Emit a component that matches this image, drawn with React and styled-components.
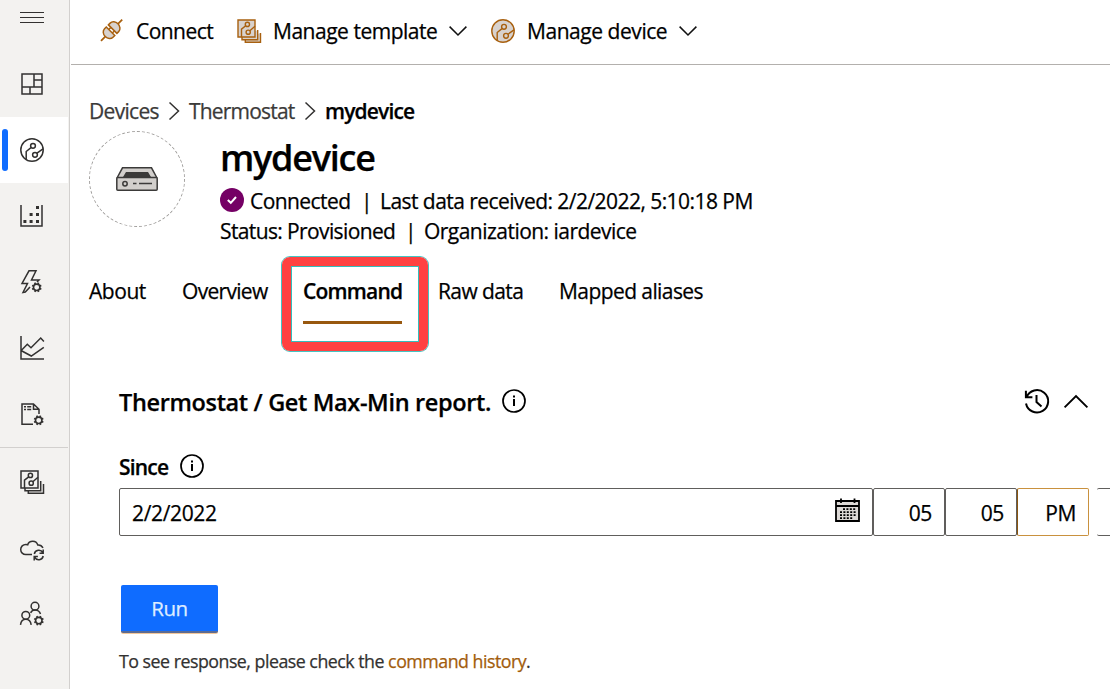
import React from "react";
import styled, { createGlobalStyle } from "styled-components";

const GlobalStyle = createGlobalStyle`
  * { box-sizing: border-box; }
  body {
    margin: 0;
    background: #fff;
    color: #000;
    font-family: "Open Sans", "Noto Sans", sans-serif;
    font-size: 21px;
    -webkit-text-stroke: 0.25px currentColor;
    overflow: hidden;
  }
`;

const Page = styled.div`
  display: flex;
  width: 1110px;
  height: 689px;
  overflow: hidden;
`;

const Sidebar = styled.nav`
  flex: none;
  width: 70px;
  height: 689px;
  background: #f3f2f0;
  border-right: 1px solid #d2d0ce;
  display: flex;
  flex-direction: column;
`;

const MenuButton = styled.div`
  height: 51px;
  padding: 11px 0 0 20px;
`;

const NavItem = styled.div`
  width: 68px;
  height: ${(p) => p.$height || 66}px;
  display: flex;
  align-items: center;
  padding-left: ${(p) => (p.$active ? 2 : 20)}px;
  gap: 12px;
  background: ${(p) => (p.$active ? "#fff" : "transparent")};
`;

const ActiveBar = styled.span`
  width: 6px;
  height: 42px;
  border-radius: 3px;
  background: #0f6cff;
`;

const NavDivider = styled.hr`
  width: 68px;
  height: 1px;
  margin: 0;
  border: 0;
  background: #d2d0ce;
`;

const Icon = styled.svg`
  display: block;
  flex: none;
  fill: none;
  stroke: ${(p) => p.$color || "#323130"};
  stroke-width: ${(p) => p.$stroke || 1.5};
  overflow: visible;
`;

const Main = styled.main`
  flex: 1;
  min-width: 0;
  display: flex;
  flex-direction: column;
`;

const Toolbar = styled.div`
  flex: none;
  height: 65px;
  margin-left: 1px;
  padding: 0 0 3px 29px;
  display: flex;
  align-items: center;
  border-bottom: 1px solid #b3b0ad;
`;

const ToolbarButton = styled.div`
  display: flex;
  align-items: center;
  width: ${(p) => p.$width}px;
  gap: 12px;
  line-height: 28px;
`;

const Label = styled.span`
  white-space: pre;
  letter-spacing: ${(p) => p.$spacing ?? -0.35}px;
  font-weight: ${(p) => p.$weight || 400};
`;

const Content = styled.div`
  padding-left: 19px;
  display: flex;
  flex-direction: column;
`;

const Breadcrumb = styled.div`
  display: flex;
  align-items: center;
  height: 30px;
  margin-top: 31px;
  color: #3b3a39;
`;

const Crumb = styled(Label)`
  width: ${(p) => p.$width}px;
  color: ${(p) => (p.$current ? "#000" : "#3b3a39")};
`;

const CrumbArrow = styled(Icon)`
  margin-right: 10px;
`;

const DeviceHeader = styled.header`
  display: flex;
  height: 118px;
  margin-top: 5px;
`;

const Avatar = styled.div`
  width: 96px;
  height: 96px;
  margin-right: 35px;
  border: 1px dashed #a19f9d;
  border-radius: 50%;
  display: flex;
  align-items: center;
  justify-content: center;
`;

const DeviceInfo = styled.div`
  display: flex;
  flex-direction: column;
`;

const Title = styled.h1`
  margin: 0;
  height: 55px;
  font-size: 36px;
  line-height: 53px;
  font-weight: 600;
  letter-spacing: -1.25px;
`;

const InfoLine = styled.div`
  display: flex;
  align-items: center;
  height: 30px;
  white-space: pre;
`;

const StatusBadge = styled.span`
  width: 24px;
  height: 24px;
  margin: -3px 6px 0 0;
  border-radius: 50%;
  background: #750065;
  display: flex;
  align-items: center;
  justify-content: center;
`;

const InfoText = styled(Label)`
  width: ${(p) => p.$width}px;
`;

const Tabs = styled.div`
  display: flex;
  height: 75px;
  margin-top: 27px;
`;

const Tab = styled.div`
  position: relative;
  height: 48px;
  width: ${(p) => p.$width}px;
  margin-right: ${(p) => p.$gap}px;
  line-height: 31px;
  border-bottom: 3px solid ${(p) => (p.$active ? "#98580f" : "transparent")};
`;

const Highlight = styled.div`
  position: absolute;
  left: -21px;
  top: -19px;
  width: 146px;
  height: 94px;
  border: 9px solid #ff4141;
  border-radius: 8px;
  box-shadow: 0 0 0 1px #45c4c3, inset 0 0 0 1px #35bdbb;
`;

const CommandCard = styled.section`
  display: flex;
  flex-direction: column;
  padding-left: 30px;
  margin-top: 35px;
`;

const CommandHead = styled.div`
  display: flex;
  align-items: center;
  height: 32px;
  font-size: 23.5px;
`;

const HeadText = styled(Label)`
  width: 383px;
`;

const HeadActions = styled.div`
  display: flex;
  align-items: center;
  margin: -2px 22px 0 auto;
  gap: 15px;
`;

const FieldLabel = styled.div`
  display: flex;
  align-items: center;
  height: 30px;
  margin-top: 34px;
`;

const FieldName = styled(Label)`
  width: 61px;
`;

const Fields = styled.div`
  display: flex;
  margin-top: 6px;
`;

const Field = styled.div`
  flex: none;
  display: flex;
  align-items: center;
  justify-content: space-between;
  width: ${(p) => p.$width}px;
  height: 48px;
  padding: 2px 12px 0;
  border: 1px solid ${(p) => (p.$focused ? "#c9913e" : "#605e5c")};
  border-radius: 2px;
`;

const TimeField = styled(Field)`
  justify-content: flex-end;
  border-left-color: ${(p) => (p.$focused ? "#8a560f" : "#605e5c")};
`;

const ZoneField = styled(Field)`
  margin-left: 8px;
  border-left: 0;
`;

const CalendarIcon = styled(Icon)`
  margin-top: -6px;
`;

const RunButton = styled.button`
  width: 97px;
  height: 48px;
  margin: 49px 0 0 2px;
  padding: 0;
  border: 0;
  border-bottom: 2px solid #5a6b94;
  border-radius: 2px;
  background: #0f6cff;
  color: #deecff;
  font: 400 20.5px/46px "Open Sans", "Noto Sans", sans-serif;
  letter-spacing: -0.4px;
  box-shadow: 0 1px 0 #f2c79a;
`;

const Footnote = styled.p`
  margin: 14px 0 0;
  font-size: 17.8px;
  line-height: 28px;
  letter-spacing: -0.5px;
  color: #323130;
`;

const HistoryLink = styled.a`
  color: #a25c0b;
`;

const gearTeeth = [0, 45, 90, 135, 180, 225, 270, 315];

function Gear({ x, y }) {
  return (
    <g transform={`translate(${x} ${y})`}>
      <circle r="3.2" strokeWidth="1.6" />
      {gearTeeth.map((a) => (
        <path key={a} d="M0 -3.4V-5" strokeWidth="1.7" transform={`rotate(${a + 22})`} />
      ))}
    </g>
  );
}

function DeviceGlyph({ color, fill = "none", stroke }) {
  return (
    <Icon width="24" height="24" $color={color} $stroke={stroke}>
      <circle cx="12" cy="12" r="11.2" fill={fill} />
      <circle cx="13" cy="7.8" r="2.4" />
      <circle cx="15" cy="16.8" r="2.4" />
      <path d="M11 9.6 6.2 13.5V21M17 15.2l6-4.3" />
    </Icon>
  );
}

function TemplateGlyph({ color, fill = "none", stroke }) {
  return (
    <Icon width="24" height="24" $color={color} $stroke={stroke}>
      <path d="M8.3 20.7v2.6h15.2V14M5 18v2.7h15.7V11" fill={fill} />
      <path d="M1 1h17v17H1z" fill={fill} />
      <circle cx="10.4" cy="5.4" r="2.1" />
      <circle cx="11.2" cy="13.2" r="2.1" />
      <path d="M8.7 6.8 4.5 10.2V18M12.8 11.8 18 7.2" />
    </Icon>
  );
}

function ChevronDown() {
  return (
    <Icon width="18" height="10" $color="#111">
      <path d="M.6.6 9 9 17.4.6" />
    </Icon>
  );
}

function InfoIcon() {
  return (
    <Icon width="24" height="24" $color="#000" $stroke="1.7">
      <circle cx="12" cy="12" r="11" />
      <path d="M12 10v7M12 6.6v2" strokeWidth="2" />
    </Icon>
  );
}

const IconLift = styled.span`
  display: block;
  margin-top: -3px;
`;

export default function App() {
  return (
    <Page>
      <GlobalStyle />
      <Sidebar>
        <MenuButton>
          <Icon width="24" height="13" $stroke="1">
            <path d="M0 1.5h24M0 6.5h24M0 11.5h24" />
          </Icon>
        </MenuButton>
        <NavItem>
          <Icon width="24" height="24">
            <path d="M2 2h20v20H2zM14 2v13M2 15h20M14 8h8M10 15v7" />
          </Icon>
        </NavItem>
        <NavItem $active>
          <ActiveBar />
          <DeviceGlyph />
        </NavItem>
        <NavItem>
          <Icon width="24" height="24">
            <path d="M1 1v21h21V1" />
            <path
              d="M16 2h3v3h-3zM16 9h3v3h-3zM9.6 9h3v3h-3zM3.4 16h3v3h-3zM9.6 16h3v3h-3zM16 16h3v3h-3z"
              fill="#323130"
              stroke="none"
            />
          </Icon>
        </NavItem>
        <NavItem>
          <Icon width="24" height="24">
            <path d="M17 12l2-2h-7.5L16 .8H9L2 13.5h5.5L3 22.5l2.3-.4L10 17" />
            <Gear x={16.7} y={17.3} />
          </Icon>
        </NavItem>
        <NavItem>
          <Icon width="24" height="24">
            <path d="M1 0v23h23M1 14.8l6.3-6.5 3.7 3.4 9.7-9.7 3.2 3.6M1 14.5 11.3 20l12.5-8.6" />
          </Icon>
        </NavItem>
        <NavItem>
          <Icon width="24" height="24">
            <path d="M13 22.3H2V2h11.5L19 7.2V12M13.5 2v5.2H19M4 4.7h2M7.2 4.7h4M4 7.5h2M7.2 7.5h4" />
            <Gear x={18.7} y={18.3} />
          </Icon>
        </NavItem>
        <NavDivider />
        <NavItem $height={68}>
          <TemplateGlyph />
        </NavItem>
        <NavItem>
          <Icon width="24" height="24">
            <path d="M12 17.6H5.8a5 5 0 0 1 0-10.2q1.2 0 1.9.3C8.3 5.5 10.6 4.2 12.8 4.2c2.6 0 4.3 1.5 5 3.7 2.6-.2 4.2 1 5.2 3" />
            <path d="M14.3 17a4.6 4.6 0 0 1 8.6-1.2M23.2 12.6v3.7h-3.7M23.2 19a4.6 4.6 0 0 1-8.6 1.2M14.2 23.4v-3.8h3.7" />
          </Icon>
        </NavItem>
        <NavItem $height={64}>
          <Icon width="24" height="24">
            <circle cx="15" cy="4.2" r="3.9" />
            <circle cx="5.8" cy="13.3" r="3.9" />
            <path d="M.5 22.8c.4-3.4 2.6-5.5 5.3-5.5s4.9 2.1 5.4 5.5M10.6 10.8c1-1.8 2.5-2.7 4.4-2.7 2.7 0 4.6 1.4 5.5 4" />
            <Gear x={18.8} y={18.6} />
          </Icon>
        </NavItem>
      </Sidebar>

      <Main>
        <Toolbar>
          <ToolbarButton $width={137}>
            <Icon width="24" height="24" $color="#a8600f" $stroke="1.5">
              <g transform="translate(11.6 11.2) rotate(-45)">
                <path
                  d="M-1.5-6h-2.5a5 6 0 0 0 0 12h2.5zM1.5-6h2.5a5 6 0 0 1 0 12h-2.5z"
                  fill="#d8d2ce"
                />
                <path d="M-9 0h-6M9 0h6" strokeWidth="1.8" />
                <path d="M-1.5-2.5h3M-1.5 2.5h3" />
              </g>
            </Icon>
            <Label $spacing={-0.55}>Connect</Label>
          </ToolbarButton>
          <ToolbarButton $width={254}>
            <TemplateGlyph color="#a8600f" fill="#d8d2ce" stroke="1.4" />
            <Label $spacing={-0.48}>Manage template</Label>
            <ChevronDown />
          </ToolbarButton>
          <ToolbarButton $width={220}>
            <DeviceGlyph color="#a8600f" fill="#d8d2ce" stroke="1.4" />
            <Label $spacing={-0.45}>Manage device</Label>
            <ChevronDown />
          </ToolbarButton>
        </Toolbar>

        <Content>
          <Breadcrumb>
            <Crumb $width={80} $spacing={-0.7}>Devices</Crumb>
            <CrumbArrow width="10" height="18">
              <path d="M.5.5 9.5 9 .5 17.5" />
            </CrumbArrow>
            <Crumb $width={116} $spacing={-0.8}>Thermostat</Crumb>
            <CrumbArrow width="10" height="18">
              <path d="M.5.5 9.5 9 .5 17.5" />
            </CrumbArrow>
            <Crumb $width={100} $weight={600} $spacing={-0.85} $current>mydevice</Crumb>
          </Breadcrumb>

          <DeviceHeader>
            <Avatar>
              <Icon width="42" height="24" $color="#3b3a39">
                <path d="M1 11 6.5.8h29L41 11" fill="#d2cfcc" />
                <path d="M10 5h22l3 5H7z" fill="#3b3a39" stroke="none" />
                <rect x=".8" y="10.5" width="40.4" height="12.7" rx="1" fill="#d2cfcc" />
                <circle cx="9" cy="16.7" r="2.2" />
                <path d="M17 16.5h3.5M23 16.5h13" />
              </Icon>
            </Avatar>
            <DeviceInfo>
              <Title>mydevice</Title>
              <InfoLine>
                <StatusBadge>
                  <Icon width="10" height="8" $color="#fff" $stroke="2">
                    <path d="M.8 4 3.8 6.8 9 1" />
                  </Icon>
                </StatusBadge>
                <InfoText $width={111} $spacing={-0.57}>Connected</InfoText>
                <InfoText $width={19}>|</InfoText>
                <InfoText $spacing={-0.55}>Last data received: 2/2/2022, 5:10:18 PM</InfoText>
              </InfoLine>
              <InfoLine>
                <InfoText $width={185} $spacing={-0.62}>Status: Provisioned</InfoText>
                <InfoText $width={19}>|</InfoText>
                <InfoText $spacing={-0.53}>Organization: iardevice</InfoText>
              </InfoLine>
            </DeviceInfo>
          </DeviceHeader>

          <Tabs>
            <Tab $width={58} $gap={35}><Label $spacing={-0.45}>About</Label></Tab>
            <Tab $width={86} $gap={35}><Label $spacing={-0.7}>Overview</Label></Tab>
            <Tab $width={99} $gap={36} $active>
              <Label $weight={600} $spacing={-0.8}>Command</Label>
              <Highlight />
            </Tab>
            <Tab $width={86} $gap={35}><Label $spacing={-0.6}>Raw data</Label></Tab>
            <Tab $width={150} $gap={0}><Label $spacing={-0.58}>Mapped aliases</Label></Tab>
          </Tabs>

          <CommandCard>
            <CommandHead>
              <HeadText $weight={600}>Thermostat / Get Max-Min report.</HeadText>
              <IconLift><InfoIcon /></IconLift>
              <HeadActions>
                <Icon width="24" height="24" $color="#000" $stroke="2">
                  <path d="M1.5 8.3A11.2 11.2 0 1 1 1 14.5M.9 1.8v6.5h6.5M11.5 6v7l5 4.5" />
                </Icon>
                <Icon width="24" height="13" $color="#000" $stroke="1.9">
                  <path d="M.6 12.4 12 1l11.4 11.4" />
                </Icon>
              </HeadActions>
            </CommandHead>

            <FieldLabel>
              <FieldName $weight={600} $spacing={-0.8}>Since</FieldName>
              <IconLift><InfoIcon /></IconLift>
            </FieldLabel>
            <Fields>
              <Field $width={754}>
                <Label>2/2/2022</Label>
                <CalendarIcon width="25" height="24" $color="#000" $stroke="1.8">
                  <path d="M1 3h23v20H1z" fill="#ddd9d6" />
                  <path d="M1 8h23M6 .5V5M19.5.5V5" />
                  <path d="M8 11.2h13M5 14.2h16M5 17.2h16M5 20.2h13" strokeDasharray="2 1.4" />
                </CalendarIcon>
              </Field>
              <TimeField $width={72}><Label>05</Label></TimeField>
              <TimeField $width={72}><Label>05</Label></TimeField>
              <TimeField $width={72} $focused><Label>PM</Label></TimeField>
              <ZoneField $width={60} />
            </Fields>
            <RunButton>Run</RunButton>
            <Footnote>
              To see response, please check the <HistoryLink>command history</HistoryLink>.
            </Footnote>
          </CommandCard>
        </Content>
      </Main>
    </Page>
  );
}
